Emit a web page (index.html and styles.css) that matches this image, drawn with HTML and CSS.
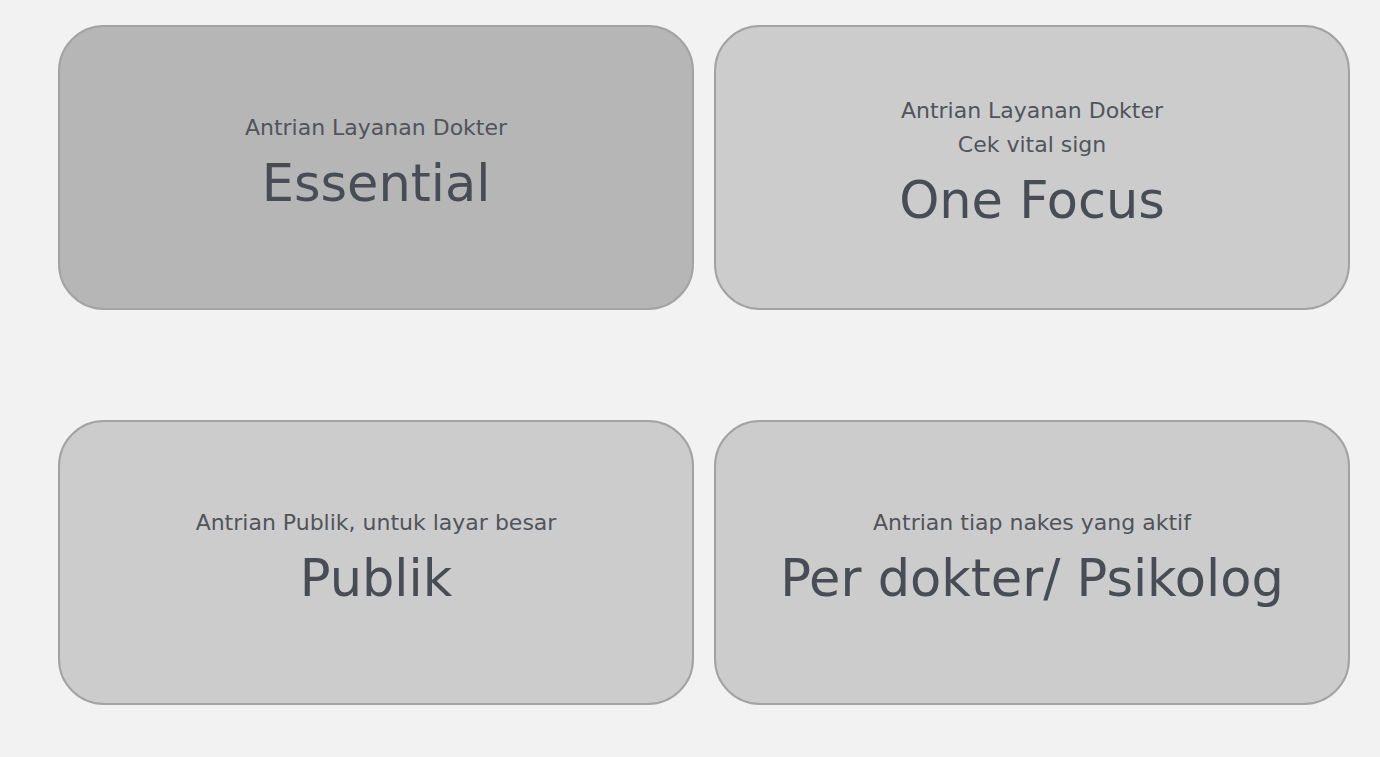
FILE: index.html
```html
<!DOCTYPE html>
<html lang="id">
<head>
<meta charset="utf-8">
<title>Antrian</title>
<link rel="stylesheet" href="styles.css">
</head>
<body>
<main class="grid">
  <a class="card card-active" href="#">
    <p class="sub">Antrian Layanan Dokter</p>
    <h2 class="title">Essential</h2>
  </a>
  <a class="card" href="#">
    <p class="sub">Antrian Layanan Dokter</p>
    <p class="sub">Cek vital sign</p>
    <h2 class="title">One Focus</h2>
  </a>
  <a class="card" href="#">
    <p class="sub">Antrian Publik, untuk layar besar</p>
    <h2 class="title">Publik</h2>
  </a>
  <a class="card" href="#">
    <p class="sub">Antrian tiap nakes yang aktif</p>
    <h2 class="title">Per dokter/ Psikolog</h2>
  </a>
</main>
</body>
</html>
```
FILE: styles.css
```css
html, body {
  margin: 0;
  padding: 0;
  background: #f2f2f2;
  font-family: "DejaVu Sans", "Open Sans", sans-serif;
}
.grid {
  display: grid;
  grid-template-columns: 636px 636px;
  grid-auto-rows: 285px;
  column-gap: 20px;
  row-gap: 110px;
  padding: 25px 30px 0 58px;
}
.card {
  box-sizing: border-box;
  display: flex;
  flex-direction: column;
  align-items: center;
  justify-content: center;
  background: #cccccc;
  border: 2px solid #a3a3a3;
  border-radius: 46px;
  text-decoration: none;
  color: #4b5059;
  text-align: center;
}
.card-active {
  background: #b6b6b6;
}
.sub {
  margin: 0;
  font-size: 22px;
  line-height: 34px;
  color: #50545b;
}
.title {
  margin: 10px 0 12px;
  font-size: 51px;
  font-weight: 400;
  line-height: 58px;
  color: #474c55;
}
```
